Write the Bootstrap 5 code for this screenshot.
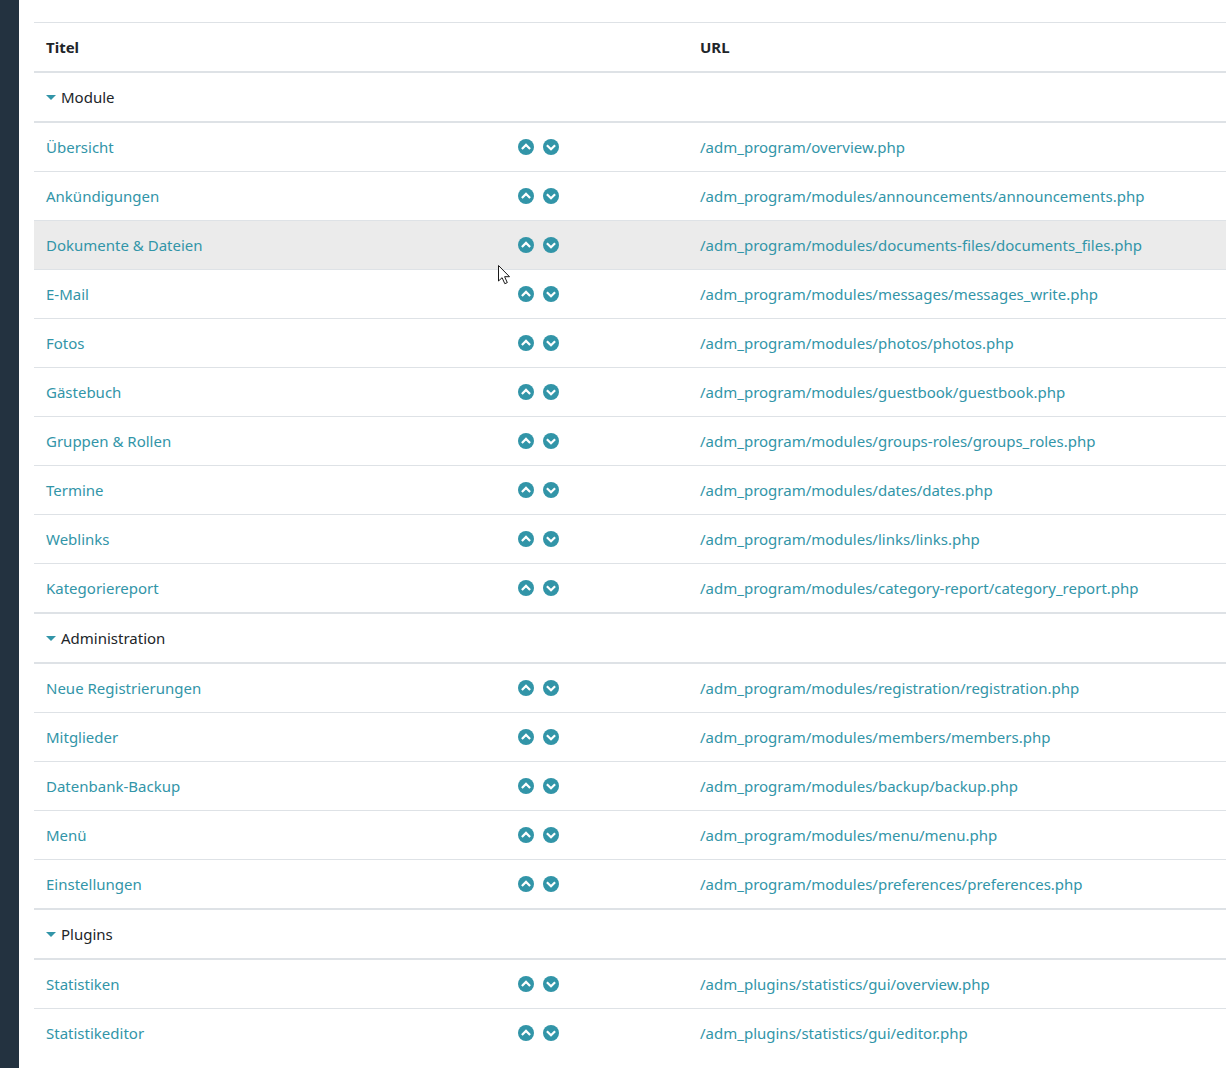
<!DOCTYPE html>
<html lang="de">
<head>
<meta charset="utf-8">
<title>Menü</title>
<link href="https://cdn.jsdelivr.net/npm/bootstrap@5.3.0/dist/css/bootstrap.min.css" rel="stylesheet">
<style>
html,body{height:100%;overflow:hidden}
body{font-family:"Noto Sans","Open Sans",sans-serif;font-size:15px;line-height:24px;color:#212529;background:#fff}
.side-strip{width:19px;flex:none;background:#233240}
.page-main{flex:1;min-width:0;padding:22px 0 0 15px}
.menu-table{table-layout:fixed;margin:0;border-top:1px solid #dee2e6;font-size:15px}
.menu-table th,.menu-table td{padding:12px;line-height:24px;border-bottom:1px solid #dee2e6;box-shadow:none}
.menu-table thead th{border-bottom:2px solid #dee2e6;font-weight:700}
.menu-table .grp td{border-bottom:2px solid #dee2e6}
.menu-table .pre td{border-bottom:2px solid #dee2e6}
.menu-table a{color:#3295a8;text-decoration:none}
.menu-table .hov td{background:#ebebeb}
.menu-table tr.end td{border-bottom-width:0}
.col-a{width:472px}.col-b{width:182px}
.arrows{display:flex;gap:9px;padding-top:4px;height:24px;align-items:flex-start}
.arrows svg{width:16px;height:16px;display:block}
.tri{display:inline-block;width:0;height:0;border-left:5px solid transparent;border-right:5px solid transparent;border-top:5px solid #3295a8;margin-right:5px;vertical-align:3px}
.mouse-arrow{position:absolute;left:497px;top:264px;width:15px;height:22px}
</style>
</head>
<body class="d-flex position-relative">
<svg width="0" height="0" class="position-absolute"><defs>
<symbol id="cu" viewBox="0 0 16 16"><circle cx="8" cy="8" r="8" fill="#3295a8"/><path d="M3.9 10 8 5.9 12.1 10" fill="none" stroke="#fff" stroke-width="2.2"/></symbol>
<symbol id="cd" viewBox="0 0 16 16"><circle cx="8" cy="8" r="8" fill="#3295a8"/><path d="M3.9 6.2 8 10.3 12.1 6.2" fill="none" stroke="#fff" stroke-width="2.2"/></symbol>
</defs></svg>
<div class="side-strip"></div>
<main class="page-main">
<table class="table menu-table">
<colgroup><col class="col-a"><col class="col-b"><col></colgroup>
<thead><tr><th>Titel</th><th></th><th>URL</th></tr></thead>
<tbody>
<tr class="grp"><td colspan="3"><span class="tri"></span>Module</td></tr>
<tr><td><a href="#">Übersicht</a></td><td><div class="arrows"><svg><use href="#cu"/></svg><svg><use href="#cd"/></svg></div></td><td><a href="#">/adm_program/overview.php</a></td></tr>
<tr><td><a href="#">Ankündigungen</a></td><td><div class="arrows"><svg><use href="#cu"/></svg><svg><use href="#cd"/></svg></div></td><td><a href="#">/adm_program/modules/announcements/announcements.php</a></td></tr>
<tr class="hov"><td><a href="#">Dokumente &amp; Dateien</a></td><td><div class="arrows"><svg><use href="#cu"/></svg><svg><use href="#cd"/></svg></div></td><td><a href="#">/adm_program/modules/documents-files/documents_files.php</a></td></tr>
<tr><td><a href="#">E-Mail</a></td><td><div class="arrows"><svg><use href="#cu"/></svg><svg><use href="#cd"/></svg></div></td><td><a href="#">/adm_program/modules/messages/messages_write.php</a></td></tr>
<tr><td><a href="#">Fotos</a></td><td><div class="arrows"><svg><use href="#cu"/></svg><svg><use href="#cd"/></svg></div></td><td><a href="#">/adm_program/modules/photos/photos.php</a></td></tr>
<tr><td><a href="#">Gästebuch</a></td><td><div class="arrows"><svg><use href="#cu"/></svg><svg><use href="#cd"/></svg></div></td><td><a href="#">/adm_program/modules/guestbook/guestbook.php</a></td></tr>
<tr><td><a href="#">Gruppen &amp; Rollen</a></td><td><div class="arrows"><svg><use href="#cu"/></svg><svg><use href="#cd"/></svg></div></td><td><a href="#">/adm_program/modules/groups-roles/groups_roles.php</a></td></tr>
<tr><td><a href="#">Termine</a></td><td><div class="arrows"><svg><use href="#cu"/></svg><svg><use href="#cd"/></svg></div></td><td><a href="#">/adm_program/modules/dates/dates.php</a></td></tr>
<tr><td><a href="#">Weblinks</a></td><td><div class="arrows"><svg><use href="#cu"/></svg><svg><use href="#cd"/></svg></div></td><td><a href="#">/adm_program/modules/links/links.php</a></td></tr>
<tr class="pre"><td><a href="#">Kategoriereport</a></td><td><div class="arrows"><svg><use href="#cu"/></svg><svg><use href="#cd"/></svg></div></td><td><a href="#">/adm_program/modules/category-report/category_report.php</a></td></tr>
<tr class="grp"><td colspan="3"><span class="tri"></span>Administration</td></tr>
<tr><td><a href="#">Neue Registrierungen</a></td><td><div class="arrows"><svg><use href="#cu"/></svg><svg><use href="#cd"/></svg></div></td><td><a href="#">/adm_program/modules/registration/registration.php</a></td></tr>
<tr><td><a href="#">Mitglieder</a></td><td><div class="arrows"><svg><use href="#cu"/></svg><svg><use href="#cd"/></svg></div></td><td><a href="#">/adm_program/modules/members/members.php</a></td></tr>
<tr><td><a href="#">Datenbank-Backup</a></td><td><div class="arrows"><svg><use href="#cu"/></svg><svg><use href="#cd"/></svg></div></td><td><a href="#">/adm_program/modules/backup/backup.php</a></td></tr>
<tr><td><a href="#">Menü</a></td><td><div class="arrows"><svg><use href="#cu"/></svg><svg><use href="#cd"/></svg></div></td><td><a href="#">/adm_program/modules/menu/menu.php</a></td></tr>
<tr class="pre"><td><a href="#">Einstellungen</a></td><td><div class="arrows"><svg><use href="#cu"/></svg><svg><use href="#cd"/></svg></div></td><td><a href="#">/adm_program/modules/preferences/preferences.php</a></td></tr>
<tr class="grp"><td colspan="3"><span class="tri"></span>Plugins</td></tr>
<tr><td><a href="#">Statistiken</a></td><td><div class="arrows"><svg><use href="#cu"/></svg><svg><use href="#cd"/></svg></div></td><td><a href="#">/adm_plugins/statistics/gui/overview.php</a></td></tr>
<tr class="end"><td><a href="#">Statistikeditor</a></td><td><div class="arrows"><svg><use href="#cu"/></svg><svg><use href="#cd"/></svg></div></td><td><a href="#">/adm_plugins/statistics/gui/editor.php</a></td></tr>
</tbody>
</table>
</main>
<svg class="mouse-arrow" viewBox="0 0 15 22"><path d="M1.5 1.5V17l3.6-3.3 2.7 6 2.5-1.1-2.7-5.9h4.9z" fill="#fff" stroke="#1a1a1a" stroke-width="1"/></svg>
<script src="https://cdn.jsdelivr.net/npm/bootstrap@5.3.0/dist/js/bootstrap.bundle.min.js"></script>
</body>
</html>
